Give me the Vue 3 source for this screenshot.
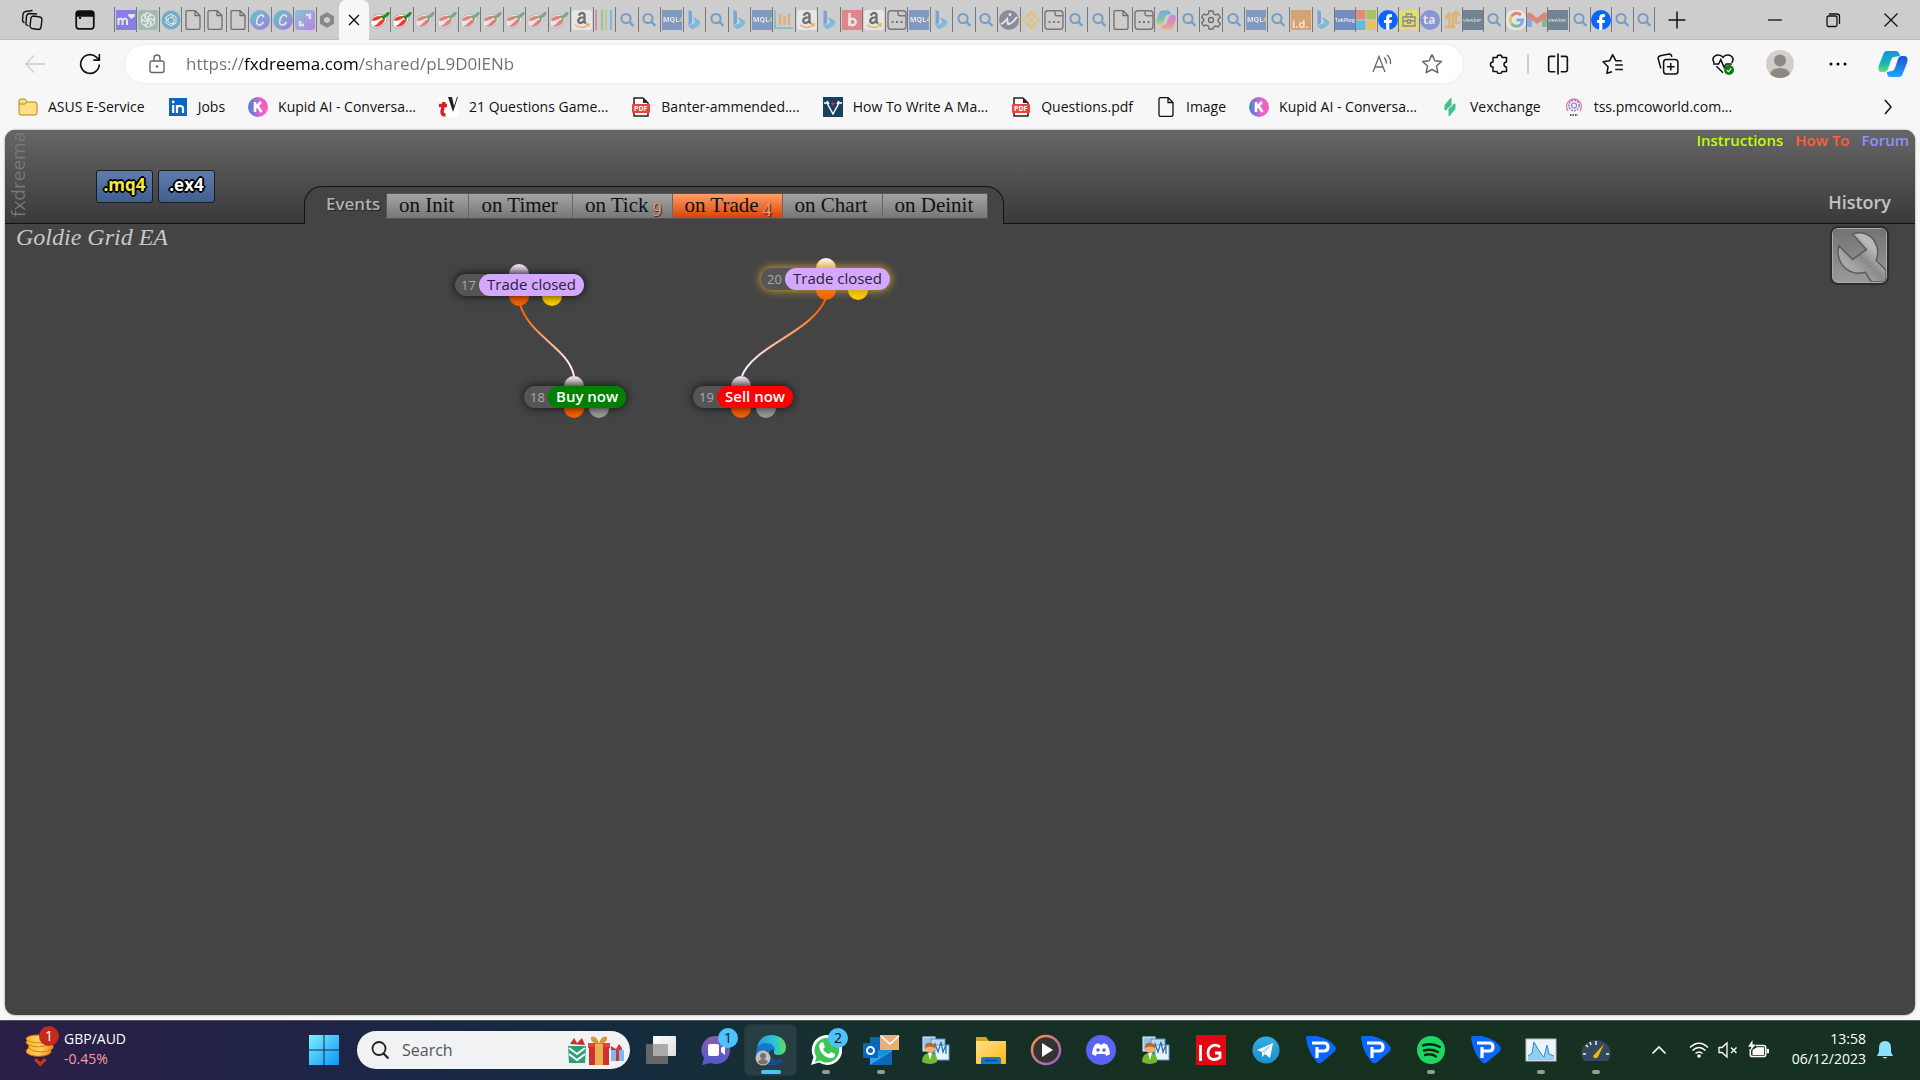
<template>
  <div class="screen">
    <svg class="gradients" aria-hidden="true">
      <defs>
        <linearGradient id="gCanva" x1="0" y1="0" x2="1" y2="1"><stop offset="0" stop-color="#00c4cc" /><stop offset="1" stop-color="#7d2ae8" /></linearGradient>
        <linearGradient id="gExpand" x1="0" y1="0" x2="1" y2="1"><stop offset="0" stop-color="#20c8d8" /><stop offset="0.5" stop-color="#7a78f0" /><stop offset="1" stop-color="#a040e8" /></linearGradient>
        <linearGradient id="gBing" x1="0" y1="0" x2="1" y2="1"><stop offset="0" stop-color="#2a7fe8" /><stop offset="1" stop-color="#35c8e8" /></linearGradient>
        <linearGradient id="gKupid" x1="0" y1="0" x2="1" y2="0"><stop offset="0.1" stop-color="#5a7fd6" /><stop offset="0.6" stop-color="#e065d0" /><stop offset="1" stop-color="#ff5cae" /></linearGradient>
        <linearGradient id="gCoA" x1="0" y1="0" x2="0" y2="1"><stop offset="0" stop-color="#1292e8" /><stop offset="0.6" stop-color="#18b8b0" /><stop offset="1" stop-color="#6fdc78" /></linearGradient>
        <linearGradient id="gCoB" x1="0" y1="0" x2="0" y2="1"><stop offset="0" stop-color="#1a50d8" /><stop offset="1" stop-color="#20a8f8" /></linearGradient>
        <linearGradient id="gOldA" x1="0" y1="0" x2="0" y2="1"><stop offset="0" stop-color="#2a80f0" /><stop offset="0.6" stop-color="#30b890" /><stop offset="1" stop-color="#f0c820" /></linearGradient>
        <linearGradient id="gOldB" x1="0" y1="0" x2="0" y2="1"><stop offset="0" stop-color="#b050f0" /><stop offset="0.5" stop-color="#f05090" /><stop offset="1" stop-color="#ff9040" /></linearGradient>
        <linearGradient id="gWin" x1="0" y1="0" x2="1" y2="1"><stop offset="0" stop-color="#7df0ff" /><stop offset="1" stop-color="#0a94f8" /></linearGradient>
        <linearGradient id="gEdge" x1="0" y1="0" x2="1" y2="0"><stop offset="0" stop-color="#1b9de2" /><stop offset="0.6" stop-color="#2cc4d8" /><stop offset="1" stop-color="#5fe05a" /></linearGradient>
        <linearGradient id="gFolder" x1="0" y1="0" x2="1" y2="1"><stop offset="0" stop-color="#ffe38a" /><stop offset="1" stop-color="#fdb813" /></linearGradient>
        <linearGradient id="gChat" x1="0" y1="0" x2="0" y2="1"><stop offset="0" stop-color="#8a5cb0" /><stop offset="1" stop-color="#5058d0" /></linearGradient>
        <linearGradient id="gPlay" x1="0" y1="0" x2="1" y2="1"><stop offset="0" stop-color="#ff9040" /><stop offset="1" stop-color="#9a5ad8" /></linearGradient>
        <linearGradient id="gTele" x1="0" y1="0" x2="0" y2="1"><stop offset="0" stop-color="#35ade1" /><stop offset="1" stop-color="#1c8fd0" /></linearGradient>
        <linearGradient id="gCoin" x1="0" y1="0" x2="1" y2="0"><stop offset="0" stop-color="#ffb62e" /><stop offset="0.5" stop-color="#ffcf5c" /><stop offset="1" stop-color="#f08a14" /></linearGradient>
        <linearGradient id="gWrench" x1="0" y1="0" x2="0" y2="1"><stop offset="0" stop-color="#737373" /><stop offset="1" stop-color="#9a9a9a" /></linearGradient>
        <linearGradient id="gShaft" x1="0" y1="1" x2="1" y2="0"><stop offset="0.3" stop-color="#a8a8a8" /><stop offset="0.5" stop-color="#8a8a8a" /><stop offset="0.7" stop-color="#b8b8b8" /></linearGradient>
        <linearGradient id="gWhite" x1="0" y1="0" x2="1" y2="1"><stop offset="0" stop-color="#fff" /><stop offset="1" stop-color="#ddd" /></linearGradient>
      </defs>
    </svg>

    <svg class="sprite" aria-hidden="true">
      <!-- favicons -->
      <symbol id="m" viewBox="0 0 20 20"><rect width="20" height="20" fill="#4433ff" /><path d="M2.500 15V8M2.500 10.500q3-4 4 0V15M6.500 10.500q3-4 4.500 0V15" fill="none" stroke="#fff" stroke-width="2" /><path d="M15.500 9l-3.500-3q0-3.500 3.500-1.500 3.500-2 3.500 1.500z" fill="#fff" /></symbol>
      <symbol id="gpt" viewBox="0 0 20 20"><rect width="20" height="20" rx="2" fill="#74aa9c" /><g fill="none" stroke="#fff" stroke-width="1.200"><path d="M7 9V5q1-2.500 4-2 2 .5 2.500 2L10 7v5" /><path d="M7 9V5q1-2.500 4-2 2 .5 2.500 2L10 7v5" transform="rotate(60 10 10)" /><path d="M7 9V5q1-2.500 4-2 2 .5 2.500 2L10 7v5" transform="rotate(120 10 10)" /><path d="M7 9V5q1-2.500 4-2 2 .5 2.500 2L10 7v5" transform="rotate(180 10 10)" /><path d="M7 9V5q1-2.500 4-2 2 .5 2.500 2L10 7v5" transform="rotate(240 10 10)" /><path d="M7 9V5q1-2.500 4-2 2 .5 2.500 2L10 7v5" transform="rotate(300 10 10)" /></g></symbol>
      <symbol id="gpt2" viewBox="0 0 20 20"><circle cx="10" cy="10" r="9.500" fill="#1a8fc8" /><g fill="none" stroke="#fff"><path d="M10 4l5 3v6l-5 3-5-3V7z" /><path d="M10 7l3 2v3l-3 2-3-2V9z" /><path d="M10 4l3 5M15 13l-5 1M5 7l2 5" /></g></symbol>
      <symbol id="file" viewBox="0 0 20 20"><path d="M3 2.500q0-2 2-2h7l5 5v12q0 2-2 2H5q-2 0-2-2zM12 .5v5h5" fill="none" stroke="currentColor" stroke-width="1.300" /></symbol>
      <symbol id="canva" viewBox="0 0 20 20"><circle cx="10" cy="10" r="10" fill="url(#gCanva)" /><path d="M13.500 7.500q0-3-2.500-2.500C7 6 5 14 8.500 15q3 .5 5-3" fill="none" stroke="#fff" stroke-width="1.600" /></symbol>
      <symbol id="expand" viewBox="0 0 20 20"><rect width="20" height="20" rx="3" fill="url(#gExpand)" /><path d="M11 5h4v4M9 15H5v-4" fill="none" stroke="#fff" stroke-width="2.400" /></symbol>
      <symbol id="hex" viewBox="0 0 20 20"><path d="M10 4.500l5 2.800v5.400l-5 2.800-5-2.800V7.300z" fill="none" stroke="#444" stroke-width="4" /></symbol>
      <symbol id="chilli" viewBox="0 0 20 20"><path d="M1 15Q0 8 5 5.500T13 5l4 1q1 5-4 9t-9 3q-2 0-3-3z" fill="#fff" stroke="#999" stroke-width="0.800" /><path d="M2 10q2-4 8-4l2 1q-3 3-9 4z" fill="#f03a30" /><path d="M3 16q4-1 6-4t6-3q0 3-4 6t-8 1z" fill="#f03a30" /><path d="M10 6q4 0 6-2.500T20 3q-2 4-5 5l-1 2z" fill="#228b2a" /></symbol>
      <symbol id="amazon" viewBox="0 0 20 20"><rect width="20" height="20" rx="3" fill="#fff" /><path d="M6.500 5.500Q10 1 12.500 4.500V12l1.500 1.500M12.500 7.500C6 7 5.500 11 7 12.500q3 1.500 5.500-2" fill="none" stroke="#111" stroke-width="2.300" /><path d="M3 15q7 5 13 0M14 14.500l3-.5-.5 3" fill="none" stroke="#f90" stroke-width="1.500" /></symbol>
      <symbol id="bars" viewBox="0 0 20 20"><path d="M2 0v20" stroke="#d02870" stroke-width="1.500" /><path d="M8 0v20" stroke="#60a030" stroke-width="1.500" /><path d="M12 0v20" stroke="#80c840" stroke-width="1.500" /><path d="M17 0v20" stroke="#30a0f0" stroke-width="2" /></symbol>
      <symbol id="search" viewBox="0 0 20 20"><circle cx="9" cy="8.500" r="4.600" fill="none" stroke="#1a6fc0" stroke-width="2" /><path d="M12.500 12l4 4" stroke="#1a6fc0" stroke-width="2.400" /></symbol>
      <symbol id="mql" viewBox="0 0 20 20"><rect width="20" height="20" fill="#3466b4" /><text x="1" y="12" font-size="7" font-weight="700" fill="#fff" font-family="Open Sans">MQL<tspan fill="#ffd800">4</tspan></text></symbol>
      <symbol id="bing" viewBox="0 0 20 20"><path d="M4.500 0L8 1.500v11L4.500 16z" fill="#2a7fe8" /><path d="M9 7l6.500 3.500q2 3-1 5.500L8 19.500 4.500 16l7-3.500z" fill="url(#gBing)" /></symbol>
      <symbol id="chart" viewBox="0 0 20 20"><path d="M1 0v18h18" fill="none" stroke="#30a0c0" stroke-width="1.600" /><path d="M6 4v11M10.500 6v9M15 4v11" stroke="#f09030" stroke-width="2.600" /></symbol>
      <symbol id="b" viewBox="0 0 20 20"><rect width="20" height="20" fill="#f04050" /><path d="M7.500 3v13" stroke="#fff" stroke-width="2.600" /><circle cx="10.500" cy="12" r="3.200" fill="none" stroke="#fff" stroke-width="2.400" /></symbol>
      <symbol id="window" viewBox="0 0 20 20"><path d="M4 .8h12q3 0 3 3v12.400q0 3-3 3H4q-3 0-3-3V3.800q0-3 3-3zM11 .8v3q0 2 2 2h6" fill="none" stroke="#222" stroke-width="1.400" /><path d="M4.500 12h2M9 12h2M13.500 12h2" stroke="#222" stroke-width="2" /></symbol>
      <symbol id="i" viewBox="0 0 20 20"><circle cx="10" cy="10" r="10" fill="#484c68" /><path d="M2 14q3-1 6-5l1 5q3 1 9-7" fill="none" stroke="#fff" stroke-width="2" /><circle cx="11" cy="4.500" r="1.500" fill="#fff" /></symbol>
      <symbol id="binance" viewBox="0 0 20 20"><path d="M10 7.500l2.500 2.500-2.500 2.500L7.500 10zM2.500 7.500L5 10l-2.500 2.500L0 10zM17.500 7.500L20 10l-2.500 2.500L15 10zM10 0l6 6-2.500 2.500L10 5 6.500 8.500 4 6zM10 20l6-6-2.500-2.500L10 15l-3.500-3.500L4 14z" fill="#f3ba2f" /></symbol>
      <symbol id="copilotOld" viewBox="0 0 20 20"><path d="M6 .5h6q2 0 3 3.500l-4 1q-1 0-2 3l-2 5q-1 2-3 2H2.500q-3.500 0-2-5L3 3q1-2.500 3-2.500z" fill="url(#gOldA)" /><path d="M14 19.500H8q-2 0-3-3.500l4-1q1 0 2-3l2-5q1-2 3-2h1.500q3.500 0 2 5L17 17q-1 2.500-3 2.500z" fill="url(#gOldB)" /></symbol>
      <symbol id="gear" viewBox="0 0 20 20"><path d="M8 1h4l.6 2.800 2 1.100 2.700-.9 2 3.500-2.100 1.900v2.200l2.100 1.900-2 3.500-2.700-.9-2 1.100L12 19H8l-.6-2.800-2-1.100-2.700.9-2-3.500 2.100-1.900V9.400L.7 7.500l2-3.500 2.700.9 2-1.100z" fill="none" stroke="#111" stroke-width="1.400" /><circle cx="10" cy="10" r="2.500" fill="none" stroke="#111" stroke-width="1.400" /></symbol>
      <symbol id="id" viewBox="0 0 20 20"><rect width="20" height="20" fill="#e07818" /><text x="1" y="18" font-size="11" font-weight="700" fill="#fff" font-family="Open Sans">i.d.</text></symbol>
      <symbol id="tek" viewBox="0 0 20 20"><rect width="20" height="20" fill="#1c50b0" /><text x="0" y="12" font-size="5" font-weight="700" fill="#fff" font-family="Open Sans">TekPing</text></symbol>
      <symbol id="ms" viewBox="0 0 20 20"><path d="M0 0h9.500v9.500H0z" fill="#f25022" /><path d="M10.500 0H20v9.500h-9.500z" fill="#7fba00" /><path d="M0 10.500h9.500V20H0z" fill="#00a4ef" /><path d="M10.500 10.500H20V20h-9.500z" fill="#ffb900" /></symbol>
      <symbol id="fb" viewBox="0 0 20 20"><circle cx="10" cy="10" r="10" fill="#0866ff" /><path d="M8.200 20v-7H6v-3h2.200V8.200Q8.200 4 12 4l2 .2v2.700h-1.300Q11.300 7 11.300 8.500V10H14l-.5 3h-2.200v7z" fill="#fff" /></symbol>
      <symbol id="bag" viewBox="0 0 20 20"><rect width="20" height="20" rx="4" fill="#f8ec20" /><path d="M4 7h12v9H4zM7.500 7V4h5v3M4 11h4M12 11h4M8.500 10h3v3h-3z" fill="none" stroke="#444" stroke-width="1.300" /></symbol>
      <symbol id="ta" viewBox="0 0 20 20"><circle cx="10" cy="10" r="10" fill="#4060d8" /><text x="3" y="14" font-size="12" font-weight="700" fill="#fff" font-family="Open Sans">ta</text></symbol>
      <symbol id="arrows" viewBox="0 0 20 20"><path d="M7.500 16V3M4 7l3.500-4M11 18V3M3 17h10M10 5l4-3.500L18 6M14 2v11h4M3 8h4" fill="none" stroke="#f09818" stroke-width="2.400" /></symbol>
      <symbol id="viewber" viewBox="0 0 20 20"><rect width="20" height="20" fill="#1a3c5c" /><text x="0" y="12" font-size="5" fill="#fff" font-family="Open Sans">viewber</text></symbol>
      <symbol id="google" viewBox="0 0 20 20"><rect width="20" height="20" rx="8" fill="#fff" /><g fill="none" stroke-width="3"><path d="M15 5Q10 1 5.500 6" stroke="#ea4335" /><path d="M5.500 6q-2.500 4 0 8" stroke="#fbbc05" /><path d="M5.500 14q4 4 9 1" stroke="#34a853" /><path d="M14.500 15q2-2 2-5H10.500" stroke="#4285f4" /></g></symbol>
      <symbol id="gmail" viewBox="0 0 20 20"><path d="M0 5l5 3v9H2q-2 0-2-2z" fill="#4285f4" /><path d="M20 5l-5 3v9h3q2 0 2-2z" fill="#34a853" /><path d="M0 4q1-3 4-1l6 5 6-5q3-2 4 1v3l-10 7L0 7z" fill="#ea4335" /></symbol>

      <!-- bookmarks -->
      <symbol id="bmFolder" viewBox="0 0 20 20"><path d="M1 4q0-2 2-2h4l2 3h8q2 0 2 2v9q0 2-2 2H3q-2 0-2-2z" fill="#ffdf85" stroke="#b8860b" /><path d="M1 7h6l2-2" fill="none" stroke="#b8860b" /></symbol>
      <symbol id="linkedin" viewBox="0 0 20 20"><rect x="1" y="1" width="18" height="18" fill="#0a66c2" /><path d="M5.200 8v8M9 8v8M9 11q1-2.500 3.500-2 2.500 0 2.500 3v4" fill="none" stroke="#fff" stroke-width="2.200" /><circle cx="5.200" cy="5" r="1.400" fill="#fff" /></symbol>
      <symbol id="kupid" viewBox="0 0 20 20"><circle cx="10" cy="10" r="10" fill="url(#gKupid)" /><path d="M7 5v10M7 11l6-6M9.500 9l4 6" stroke="#fff" stroke-width="2.600" fill="none" /></symbol>
      <symbol id="tv" viewBox="0 0 20 20"><rect width="20" height="20" fill="#fff" /><path d="M0 8.500h8M5 5L3 15q0 3 3.500 3" stroke="#e01b22" stroke-width="3.400" fill="none" /><path d="M9 0h4l2 9 3-9h1l-5 15z" fill="#222" /></symbol>
      <symbol id="pdf" viewBox="0 0 20 20"><path d="M3 8V1h9l5 5v13H3v-4" fill="#fff" stroke="#222" stroke-width="1.500" /><path d="M12 1v5h5z" fill="#222" /><rect x="1" y="7" width="18" height="9" rx="1" fill="#f43f3f" /><text x="3" y="14" font-size="7" font-weight="700" fill="#fff" font-family="Open Sans">PDF</text></symbol>
      <symbol id="vm" viewBox="0 0 20 20"><rect width="20" height="20" fill="#16415f" /><path d="M1 6h3l6 11 6-11h3M4 4l2 3M16 4l-2 3" fill="none" stroke="#fff" stroke-width="1.500" /><path d="M10 9L8 6.500q1-2 2-.5 1-1.500 2 .5z" fill="#f22" /></symbol>
      <symbol id="vex" viewBox="0 0 20 20"><path d="M11 1v7l-6 5V8zM9 19v-7l6-5v5zM5 13l6-2M9 9l6-2" fill="#44c08a" stroke="#44c08a" stroke-width="1" /><path d="M7 13l6-6" stroke="#f7f7f7" stroke-width="1" /></symbol>
      <symbol id="tss" viewBox="0 0 20 20"><path d="M4 14A7.500 7.500 0 1 1 16 14" fill="none" stroke="#e080a8" stroke-width="1.300" /><circle cx="10" cy="8.500" r="5.200" fill="none" stroke="#9080c8" stroke-width="1.600" stroke-dasharray="2 1" /><circle cx="10" cy="8.500" r="2.500" fill="none" stroke="#8080c8" stroke-width="1.200" /><path d="M6 18h8" stroke="#5050a0" stroke-width="2" stroke-dasharray="1.500 1" /></symbol>

      <!-- browser toolbar -->
      <symbol id="workspaces" viewBox="0 0 22 22"><g fill="none" stroke="currentColor" stroke-width="1.400" stroke-linejoin="round"><path d="M12.500 7l6.500 1q2 .5 2 2.500l-1 8q-.5 2-2.500 2l-6.500-1q-2-.5-2-2.500l1-8q.5-2 2.500-2z" /><path d="M7.500 17L5 15.500 5.500 7q.5-2 2.500-2.500l8 .5" /><path d="M3.500 14L1.500 12 2 5q.5-2 2.500-2.500l7-1" /></g></symbol>
      <symbol id="tabmenu" viewBox="0 0 20 20"><rect x="2" y="2" width="16" height="16" rx="2.500" fill="none" stroke="currentColor" stroke-width="1.600" /><path d="M2 3q0-1 2-1h12q2 0 2 1v4H2z" fill="currentColor" /><path d="M5.500 7v2" stroke="currentColor" stroke-width="2" /></symbol>
      <symbol id="x" viewBox="0 0 20 20"><path d="M4.500 4.500l11 11M15.500 4.500l-11 11" stroke="currentColor" stroke-width="1.500" /></symbol>
      <symbol id="plus" viewBox="0 0 20 20"><path d="M10 1.500v17M1.500 10h17" stroke="currentColor" stroke-width="1.500" /></symbol>
      <symbol id="min" viewBox="0 0 20 20"><path d="M3 10h14" stroke="currentColor" stroke-width="1.300" /></symbol>
      <symbol id="max" viewBox="0 0 20 20"><rect x="4" y="6" width="10" height="10.500" rx="1.500" fill="none" stroke="currentColor" stroke-width="1.300" /><path d="M6 4h8q2.500 0 2.500 2.500V14" fill="none" stroke="currentColor" stroke-width="1.300" /></symbol>
      <symbol id="close" viewBox="0 0 20 20"><path d="M3.500 3.500l13 13M16.500 3.500l-13 13" stroke="currentColor" stroke-width="1.300" /></symbol>
      <symbol id="back" viewBox="0 0 20 20"><path d="M20 10H1M9 1.500L.8 10 9 18.500" fill="none" stroke="currentColor" stroke-width="1.300" /></symbol>
      <symbol id="reload" viewBox="0 0 20 20"><path d="M18.500 10.500A8.500 8.500 0 1 1 16 4l2.500 2.500M18.500 1v5.500H13" fill="none" stroke="currentColor" stroke-width="1.500" /></symbol>
      <symbol id="lock" viewBox="0 0 20 20"><rect x="3" y="7" width="14" height="11.500" rx="2" fill="none" stroke="currentColor" stroke-width="1.400" /><path d="M7 7V4q0-3 3-3t3 3v3" fill="none" stroke="currentColor" stroke-width="1.400" /><circle cx="10" cy="12.500" r="1.300" fill="currentColor" /></symbol>
      <symbol id="aloud" viewBox="0 0 20 20"><path d="M1 18L7 2.500 13 18M3 13h8M12 3.500q2.500 2 2.500 6M15 1q4 3 3.500 9" fill="none" stroke="currentColor" stroke-width="1.300" /></symbol>
      <symbol id="star" viewBox="0 0 20 20"><path d="M10 1.500l2.600 5.600 6 .7-4.500 4.100 1.200 6L10 15l-5.300 2.900 1.200-6L1.400 7.800l6-.7z" fill="none" stroke="currentColor" stroke-width="1.300" stroke-linejoin="round" /></symbol>
      <symbol id="puzzle" viewBox="0 0 20 20"><path d="M8 3.500q0-2.500 2.500-2.500T13 3.500h4.500V8Q15 8 15 10.500t2.500 2.500v4.500H13q0 2-2.500 2T8 17.500H4V13q-2.500 0-2.500-2.500T4 8V3.500z" fill="none" stroke="currentColor" stroke-width="1.500" stroke-linejoin="round" /></symbol>
      <symbol id="split" viewBox="0 0 20 20"><path d="M10 .5v19M7.500 3H3q-1.500 0-1.500 1.500v11Q1.500 17 3 17h4.500M12.500 3H17q1.500 0 1.500 1.500v11q0 1.500-1.500 1.500h-4.500" fill="none" stroke="currentColor" stroke-width="1.500" /></symbol>
      <symbol id="favs" viewBox="0 0 20 20"><path d="M9 17l-4.500 1.500 1-6L1 8l6-1 2.700-5.500L12.500 7H18M12 11h7M12 15h7" fill="none" stroke="currentColor" stroke-width="1.400" stroke-linejoin="round" /></symbol>
      <symbol id="collections" viewBox="0 0 20 20"><rect x="6" y="6" width="13" height="13" rx="2.500" fill="none" stroke="currentColor" stroke-width="1.400" /><path d="M12.500 9v7M9 12.500h7M3.500 14L1 5q0-2 2-2.500L11 1q2 0 2.500 2.500" fill="none" stroke="currentColor" stroke-width="1.400" /></symbol>
      <symbol id="heart" viewBox="0 0 20 20"><path d="M2 9Q-1 4 4 2q4-1 6 2 2-3 6-2 5 2 2 7M4 12l6 6M1 10h5l2-4 3 7 2-3h5" fill="none" stroke="currentColor" stroke-width="1.400" /><circle cx="15.500" cy="15.500" r="4.500" fill="#0f7b0f" /><path d="M13.500 15.500l1.500 1.500 2.500-3" fill="none" stroke="#fff" /></symbol>
      <symbol id="avatar" viewBox="0 0 28 28"><circle cx="14" cy="14" r="14" fill="#d2cfcb" /><circle cx="14" cy="10.500" r="6" fill="#8d8884" /><path d="M4 24q2-6 10-6t10 6q-4 4-10 4T4 24z" fill="#8d8884" /></symbol>
      <symbol id="dots" viewBox="0 0 20 20"><circle cx="3" cy="10" r="1.500" /><circle cx="10" cy="10" r="1.500" /><circle cx="17" cy="10" r="1.500" /></symbol>
      <symbol id="copilot" viewBox="0 0 30 28"><path d="M9 1h9q3 0 4 5l-6 1q-2 0-3 3l-3 9q-1 3-4 3H4q-5 0-3-7L5 5q1-4 4-4z" fill="url(#gCoA)" /><path d="M21 27h-9q-3 0-3-5l5-1q2 0 3-3l3-9q1-3 4-3h2q5 0 3 7l-4 10q-1 4-4 4z" fill="url(#gCoB)" /><path d="M15 8h4l-4 12h-4z" fill="#fff" opacity="0.800" /></symbol>
      <symbol id="chevron" viewBox="0 0 20 20"><path d="M7 3l6 7-6 7" fill="none" stroke="currentColor" stroke-width="1.500" /></symbol>

      <!-- taskbar -->
      <symbol id="tWin" viewBox="0 0 30 30"><path d="M0 0h14.500v14.500H0zM15.500 0H30v14.500H15.500zM0 15.500h14.500V30H0zM15.500 15.500H30V30H15.500z" fill="url(#gWin)" /></symbol>
      <symbol id="tView" viewBox="0 0 32 32"><rect x="1" y="10" width="22" height="20" rx="1" fill="#666" /><rect x="8" y="2" width="23" height="20" rx="1" fill="url(#gWhite)" /><rect x="8" y="10" width="15" height="12" fill="#aaa" /></symbol>
      <symbol id="tChat" viewBox="0 0 32 32"><path d="M16 2a14 14 0 1 1-5 27L2 31l2-7A14 14 0 0 1 16 2z" fill="url(#gChat)" /><rect x="8" y="10" width="11" height="12" rx="2" fill="#fff" /><path d="M21 14l4-3v10l-4-3z" fill="#fff" /></symbol>
      <symbol id="tEdge" viewBox="0 0 32 32"><path d="M2 13Q5 1 17 1q13 1 14 12 0 8-8 8-5 0-4-4 1-5-5-6-8-1-12 2z" fill="url(#gEdge)" /><path d="M1 18q1-9 10-9 8 0 9 7-6-1-6 4 1 8 14 6-5 5-12 5Q2 30 1 18z" fill="#1878d0" /><path d="M13 15q-2 5 1 8 4 4 14 3-9 8-17 3-5-6 2-14z" fill="#124a94" /><circle cx="8" cy="24" r="7.500" fill="#c4c0bc" /><circle cx="8" cy="22" r="3" fill="#77726e" /><path d="M3 28.500q1-3.500 5-3.500t5 3.500q-5 4-10 0z" fill="#77726e" /></symbol>
      <symbol id="tWhats" viewBox="0 0 32 32"><path d="M16 1a15 15 0 1 1-7 27.500L1 31l2.500-8A15 15 0 0 1 16 1z" fill="#fff" /><path d="M16 4a12.300 12.300 0 1 1-6 22.500L5 28l1.500-5A12.300 12.300 0 0 1 16 4z" fill="#3dc453" /><path d="M10 9l3-1 2 5-2 2q2 4 6 5l2-2 4 2q0 4-4 4-6 0-10-6-3-5-1-9z" fill="#fff" /></symbol>
      <symbol id="tOutlook" viewBox="0 0 38 32"><rect x="8" y="3" width="22" height="26" fill="#1490df" /><path d="M8 3h11v13H8z" fill="#0a64b8" /><path d="M8 16l11 7 11-7v15H8z" fill="#28a8ea" /><path d="M8 31l22-14v14z" fill="#1066b8" /><rect x="1" y="9" width="15" height="15" rx="1" fill="#0a64c0" /><circle cx="8.500" cy="16.500" r="3.500" fill="none" stroke="#fff" stroke-width="2" /><rect x="18" y="1" width="19" height="15" fill="#e8b078" /><path d="M19 2l9 8 9-8" fill="none" stroke="#fff" stroke-width="1.500" /></symbol>
      <symbol id="tMt4" viewBox="0 0 32 32"><rect x="3" y="3" width="12" height="14" fill="#8ec8f0" stroke="#e8f4ff" /><rect x="11" y="5" width="14" height="14" fill="#b8dcf4" stroke="#4a90cc" /><rect x="15" y="11" width="14" height="15" fill="#e8f4fc" stroke="#5a9ccc" /><path d="M13 19l2-9 3 8 3-10 2 10 3-7v9" fill="none" stroke="#3070b0" stroke-width="1.300" /><circle cx="10" cy="14" r="5" fill="#f0b070" /><path d="M5 14q0-6 6-5 5 1 4 5-5-3-10 0z" fill="#c8601c" /><path d="M2 28q0-9 8-9t7 9q-7 4-15 0z" fill="#70b830" /><path d="M8 19h4l-2 7z" fill="#fff" /></symbol>
      <symbol id="tFolder" viewBox="0 0 32 32"><path d="M1 3h10l3 4h17v8H1z" fill="#e0a010" /><rect x="1" y="7" width="30" height="23" rx="1" fill="url(#gFolder)" /><path d="M6 30v-5q0-2 2-2h16q2 0 2 2v5z" fill="#1478d0" /><path d="M10 26.500h12" stroke="#0a4f96" stroke-width="1.500" /></symbol>
      <symbol id="tPlay" viewBox="0 0 32 32"><circle cx="16" cy="16" r="14" fill="#333" stroke="url(#gPlay)" stroke-width="2.500" /><path d="M12 9l11 7-11 7z" fill="#fff" /></symbol>
      <symbol id="tDiscord" viewBox="0 0 32 32"><circle cx="16" cy="16" r="15" fill="#5865f2" /><path d="M10 10.500l3.500-1.500 1 1.500h3l1-1.500 3.500 1.500q3 4.500 3 9.500l-3.500 2-1.500-2h-8l-1.500 2L7 20q0-5 3-9.500z" fill="#fff" /><circle cx="13" cy="16" r="1.800" fill="#5865f2" /><circle cx="19" cy="16" r="1.800" fill="#5865f2" /></symbol>
      <symbol id="tIg" viewBox="0 0 32 32"><rect x="1" y="1" width="30" height="30" fill="#e30613" /><path d="M5.500 11v16M25 13q-4-3-8-1t-4 7q0 6 6 6.500 3 0 6-2v-4.500h-5" fill="none" stroke="#fff" stroke-width="2.800" /></symbol>
      <symbol id="tTele" viewBox="0 0 32 32"><circle cx="16" cy="16" r="13.500" fill="url(#gTele)" /><path d="M7 16l16-7-3 15-5-4-3 3v-5z" fill="#fff" /><path d="M12 18l8-6-6 7" stroke="#8cc8ec" fill="none" /></symbol>
      <symbol id="tP" viewBox="0 0 32 32"><path d="M1 4q0-2 2-2h9q14 3 19 12 0 3-3 5L16 29q-3 1-4-1Q3 19 1 4z" fill="#0a66ff" /><path d="M7 9h12q4 0 4 4t-4 4h-6M12 13v11" fill="none" stroke="#fff" stroke-width="3.200" /></symbol>
      <symbol id="tSpotify" viewBox="0 0 32 32"><circle cx="16" cy="16" r="14" fill="#1ed760" /><path d="M8 11.500q9-3 17 1.500M9 16.500q7-2 14 1.500M10 21q6-2 11 1.500" fill="none" stroke="#10251a" stroke-width="2.400" stroke-linecap="round" /></symbol>
      <symbol id="tMon" viewBox="0 0 32 32"><rect x="1" y="5" width="30" height="22" fill="#eef4f8" stroke="#bbb" /><path d="M3 22l4-3 2-11 4 7 4 6 2 2 3-12 2 9 5 2v4H3z" fill="#8cd0f4" /><path d="M3 22l4-3 2-11 4 7 4 6 2 2 3-12 2 9 5 2" fill="none" stroke="#2a8cc8" /></symbol>
      <symbol id="tGauge" viewBox="0 0 32 32"><path d="M4 27Q-1 20 3 13 8 6 16 6t13 7q4 7-1 14z" fill="#34495e" /><path d="M3 20h3M26 20h3M6 11l2 2M16 7v4M10 8l1 3" stroke="#eee" stroke-width="1.500" /><path d="M24 10l-6 13q-4 3-5-1z" fill="#f5b50a" /></symbol>
      <symbol id="coins" viewBox="0 0 32 32"><g fill="url(#gCoin)" stroke="#d87a10" stroke-width="0.800"><ellipse cx="13" cy="18" rx="11" ry="4.500" /><ellipse cx="15" cy="14" rx="11" ry="4.500" /><ellipse cx="13" cy="10" rx="11" ry="4" /><ellipse cx="13" cy="7" rx="11" ry="3.500" /></g><path d="M10 25l4.500 4.500L19 25" fill="none" stroke="#c43a18" stroke-width="3" /></symbol>
      <symbol id="gifts" viewBox="0 0 58 32"><path d="M2 12h18l-1 17H3z" fill="#2ca070" /><path d="M3 14l8 6 8-6M3 20l8 6 8-6" fill="none" stroke="#fff" stroke-width="2" /><path d="M4 10l4-6 3 5 5-5 3 7z" fill="#c83030" /><rect x="22" y="9" width="22" height="5" fill="#e84040" /><rect x="23" y="13" width="20" height="18" fill="#d03030" /><path d="M29 10h8v21h-8z" fill="#e8b050" /><path d="M33 10q-9-1-8-7 5-2 8 6 3-8 8-6 1 6-8 7z" fill="#d89838" /><rect x="45" y="16" width="13" height="11" fill="#80b8e8" /><path d="M50 16h3v11h-3z" fill="#d03838" /><path d="M45 12l5 3 3-5 3 4v2H45z" fill="#d03838" /></symbol>
      <symbol id="mag" viewBox="0 0 20 20"><circle cx="9" cy="8.500" r="6.500" fill="none" stroke="#222" stroke-width="1.800" /><path d="M13.500 13.500l5 5" stroke="#222" stroke-width="2.200" /></symbol>
      <symbol id="up" viewBox="0 0 20 20"><path d="M3.500 13.500L10 7l6.500 6.500" fill="none" stroke="#fff" stroke-width="1.600" /></symbol>
      <symbol id="wifi" viewBox="0 0 20 20"><path d="M1 7.500q9-8.500 18 0M3.500 10.500q6.500-6 13 0M6.500 13.500q3.500-3 7 0" fill="none" stroke="#fff" stroke-width="1.500" /><circle cx="10" cy="16" r="1.800" fill="#fff" /></symbol>
      <symbol id="mute" viewBox="0 0 20 20"><path d="M1 7.500h3L9 3v14l-5-4.500H1zM13 7.500l5.500 5.500M18.500 7.500L13 13" fill="none" stroke="#fff" stroke-width="1.300" /></symbol>
      <symbol id="battery" viewBox="0 0 20 20"><path d="M3 9v5q0 2 2 2h10q2 0 2-2V8q0-2-2-2H8" fill="none" stroke="#fff" stroke-width="1.400" /><path d="M5 10l4-2.500h6.500v7H5zM18 9h2v4h-2z" fill="#fff" /><path d="M5 1L1 7h3l-1 4 5-6H5z" fill="#fff" /></symbol>
      <symbol id="bell" viewBox="0 0 20 20"><path d="M10 1q6 0 6 7v4l2 4H2l2-4V8q0-7 6-7zM7.500 17h5q-2.500 3-5 0z" fill="#8fe0ff" /></symbol>
    </svg>

    <div class="tabstrip">
      <div class="strip-left">
        <button aria-label="Workspaces"><svg class="i22"><use href="#workspaces" /></svg></button>
        <button aria-label="Tab actions"><svg class="i22"><use href="#tabmenu" /></svg></button>
      </div>
      <div class="tabs tabs-before">
        <button v-for="(t, n) in tabsBefore" :key="n" class="tab" :aria-label="t">
          <svg class="fav dim"><use :href="'#' + t" /></svg>
        </button>
      </div>
      <button class="active-tab" aria-label="Close tab"><svg class="i18"><use href="#x" /></svg></button>
      <div class="tabs tabs-wide">
        <button v-for="(t, n) in tabsWide" :key="n" class="tab" :aria-label="t">
          <svg class="fav" :class="{ dim: n > 1 }"><use :href="'#' + t" /></svg>
        </button>
      </div>
      <div class="tabs tabs-narrow">
        <button v-for="(t, n) in tabsNarrow" :key="n" class="tab" :aria-label="t">
          <svg class="fav" :class="{ dim: t !== 'fb' }"><use :href="'#' + t" /></svg>
        </button>
      </div>
      <button class="new-tab" aria-label="New tab"><svg class="i20"><use href="#plus" /></svg></button>
      <div class="window-buttons">
        <button v-for="b in ['min', 'max', 'close']" :key="b" :aria-label="b"><svg class="i20"><use :href="'#' + b" /></svg></button>
      </div>
    </div>

    <div class="toolbar">
      <button class="nav disabled" aria-label="Back"><svg class="i20"><use href="#back" /></svg></button>
      <button class="nav" aria-label="Refresh"><svg class="i22"><use href="#reload" /></svg></button>
      <div class="address">
        <svg class="i20 grey"><use href="#lock" /></svg>
        <input v-model="url" class="url" type="text" aria-label="Address" />
        <svg class="i20 grey"><use href="#aloud" /></svg>
        <svg class="i22 grey"><use href="#star" /></svg>
      </div>
      <button class="tool" aria-label="Extensions"><svg class="i20"><use href="#puzzle" /></svg></button>
      <span class="divider"></span>
      <button v-for="t in ['split', 'favs', 'collections', 'heart']" :key="t" class="tool" :aria-label="t">
        <svg class="i22"><use :href="'#' + t" /></svg>
      </button>
      <button class="profile" aria-label="Profile"><svg class="i28"><use href="#avatar" /></svg></button>
      <button class="tool" aria-label="Settings"><svg class="i20"><use href="#dots" /></svg></button>
      <button class="tool" aria-label="Copilot"><svg class="i30"><use href="#copilot" /></svg></button>
    </div>

    <nav class="bookmarks">
      <a v-for="(b, n) in bookmarks" :key="n" href="#"><svg class="i20"><use :href="'#' + b.icon" /></svg>{{ b.text }}</a>
      <button aria-label="More bookmarks"><svg class="i20"><use href="#chevron" /></svg></button>
    </nav>

    <main class="page">
      <header class="head">
        <div class="brand">fxdreema</div>
        <div class="exports">
          <button class="mq">.mq4</button>
          <button class="ex">.ex4</button>
        </div>
        <div class="events">
          <span class="events-label">Events</span>
          <div class="event-tabs">
            <button v-for="e in events" :key="e.name" :class="{ on: e.name === current }" @click="current = e.name">
              {{ e.name }}<sub v-if="e.count">{{ e.count }}</sub>
            </button>
          </div>
        </div>
        <div class="head-right">
          <div class="links">
            <a class="instructions" href="#">Instructions</a>
            <a class="howto" href="#">How To</a>
            <a class="forum" href="#">Forum</a>
          </div>
          <a class="history" href="#">History</a>
        </div>
      </header>

      <section class="canvas">
        <h1>Goldie Grid EA</h1>
        <button class="wrench" aria-label="Options">
          <svg viewBox="0 0 54 54">
            <rect width="54" height="54" rx="4" fill="url(#gWrench)" />
            <path d="M20 5q14-4 22 7 6 9 2 20l10 10v12H39L33 44Q18 48 9 36 3 27 6 17l14 14 14-10z" fill="url(#gShaft)" stroke="#5a5a5a" stroke-width="1.500" />
          </svg>
        </button>

        <svg class="wires">
          <defs>
            <linearGradient id="wire" x1="0" y1="0" x2="0" y2="1">
              <stop offset="0.150" stop-color="#ff6400" />
              <stop offset="0.850" stop-color="#fff0fa" />
            </linearGradient>
          </defs>
          <path v-for="w in wires" :key="w" :d="w" />
        </svg>

        <div v-for="n in nodes" :key="n.id" class="node" :class="[n.kind, { selected: n.id === 20 }]" :style="{ left: n.x + 'px', top: n.y + 'px' }">
          <i class="port in" :style="{ left: n.port + 'px' }"></i>
          <i class="port out" :style="{ left: n.port + 'px' }"></i>
          <i class="port alt" :style="{ left: n.alt + 'px' }"></i>
          <div class="body"><span class="num">{{ n.id }}</span><span class="label">{{ n.label }}</span></div>
        </div>
      </section>
    </main>

    <footer class="taskbar">
      <div class="widget">
        <div class="coin-wrap"><svg class="i36"><use href="#coins" /></svg><span class="badge red">1</span></div>
        <div>
          <div class="pair">GBP/AUD</div>
          <div class="change">-0.45%</div>
        </div>
      </div>
      <button class="start" aria-label="Start"><svg class="i30"><use href="#tWin" /></svg></button>
      <label class="search">
        <svg class="i20"><use href="#mag" /></svg>
        <input type="text" placeholder="Search" aria-label="Search" />
        <svg class="gifts"><use href="#gifts" /></svg>
      </label>
      <div class="apps">
        <button v-for="(a, n) in apps" :key="n" class="app" :class="{ current: a.icon === 'tEdge' }" :aria-label="a.icon">
          <svg :class="a.icon === 'tOutlook' ? 'wide' : 'i32'"><use :href="'#' + a.icon" /></svg>
          <span v-if="a.badge" class="badge blue">{{ a.badge }}</span>
          <span v-if="a.open" class="dot"></span>
        </button>
      </div>
      <div class="tray">
        <svg class="i20 up"><use href="#up" /></svg>
        <svg class="i20"><use href="#wifi" /></svg>
        <svg class="i20"><use href="#mute" /></svg>
        <svg class="i22"><use href="#battery" /></svg>
        <div class="clock">
          <div>13:58</div>
          <div>06/12/2023</div>
        </div>
        <svg class="i20"><use href="#bell" /></svg>
      </div>
    </footer>
  </div>
</template>

<script setup>
import { ref } from "vue";

const url = ref("https://fxdreema.com/shared/pL9D0lENb");
const current = ref("on Trade");

const tabsBefore = ["m", "gpt", "gpt2", "file", "file", "file", "canva", "canva", "expand", "hex"];
const tabsWide = [
  ...Array(9).fill("chilli"),
  ..."amazon bars search search mql bing search bing mql chart amazon bing b amazon window mql bing search search i binance window search search file window copilotOld search gear search mql search id bing".split(" "),
];
const tabsNarrow = "tek ms fb bag ta arrows viewber search google gmail viewber search fb search search".split(" ");

const bookmarks = [
  { icon: "bmFolder", text: "ASUS E-Service" },
  { icon: "linkedin", text: "Jobs" },
  { icon: "kupid", text: "Kupid AI - Conversa..." },
  { icon: "tv", text: "21 Questions Game..." },
  { icon: "pdf", text: "Banter-ammended...." },
  { icon: "vm", text: "How To Write A Ma..." },
  { icon: "pdf", text: "Questions.pdf" },
  { icon: "file", text: "Image" },
  { icon: "kupid", text: "Kupid AI - Conversa..." },
  { icon: "vex", text: "Vexchange" },
  { icon: "tss", text: "tss.pmcoworld.com..." },
];

const events = [
  { name: "on Init" },
  { name: "on Timer" },
  { name: "on Tick", count: 9 },
  { name: "on Trade", count: 4 },
  { name: "on Chart" },
  { name: "on Deinit" },
];

const nodes = [
  { id: 17, label: "Trade closed", kind: "closed", x: 450, y: 50, port: 54, alt: 87 },
  { id: 20, label: "Trade closed", kind: "closed", x: 756, y: 44, port: 55, alt: 87 },
  { id: 18, label: "Buy now", kind: "buy", x: 519, y: 162, port: 40, alt: 65 },
  { id: 19, label: "Sell now", kind: "sell", x: 688, y: 162, port: 38, alt: 63 },
];
const wires = [
  "M515 80C524 112 564 124 569 152",
  "M821 74C808 108 748 122 737 152",
];

const apps = [
  { icon: "tView" },
  { icon: "tChat", badge: 1 },
  { icon: "tEdge", open: true },
  { icon: "tWhats", badge: 2, open: true },
  { icon: "tOutlook", open: true },
  { icon: "tMt4" },
  { icon: "tFolder" },
  { icon: "tPlay" },
  { icon: "tDiscord" },
  { icon: "tMt4" },
  { icon: "tIg" },
  { icon: "tTele" },
  { icon: "tP" },
  { icon: "tP" },
  { icon: "tSpotify", open: true },
  { icon: "tP" },
  { icon: "tMon", open: true },
  { icon: "tGauge", open: true },
];
</script>

<style>
body {
  margin: 0;
  background: #f7f7f7;
}
</style>

<style scoped>
.screen {
  display: flex;
  flex-direction: column;
  min-height: 100vh;
  font-family: "Open Sans", "Noto Sans", sans-serif;
  font-size: 14px;
  color: #111;
  overflow: hidden;
}

* {
  box-sizing: border-box;
}

svg {
  display: block;
  flex: none;
}

.gradients {
  position: absolute;
  width: 0;
  height: 0;
}

.sprite {
  display: none;
}

button {
  border: 0;
  padding: 0;
  background: none;
  color: inherit;
  font: inherit;
  display: flex;
  align-items: center;
  justify-content: center;
}

input {
  border: 0;
  outline: 0;
  padding: 0;
  background: none;
  font: inherit;
  min-width: 0;
}

a {
  color: inherit;
  text-decoration: none;
}

.i18 { width: 18px; height: 18px; }
.i20 { width: 20px; height: 20px; }
.i22 { width: 22px; height: 22px; }
.i28 { width: 28px; height: 28px; }
.i30 { width: 30px; height: 30px; }
.i32 { width: 32px; height: 32px; }
.i36 { width: 36px; height: 36px; }
.grey { color: #666; }

/* tab strip */
.tabstrip {
  display: flex;
  height: 40px;
  background: #cdcdcd;
  border-bottom: 1px solid #bdbdbd;
}

.strip-left {
  display: flex;
  width: 114px;
  padding-left: 21px;
  gap: 31px;
}

.tabs {
  display: flex;
  align-items: center;
}

.tabs-before { width: 225px; }
.tabs-wide { width: 966px; }
.tabs-narrow { width: 320px; }

.tab {
  flex: 1;
  min-width: 0;
  height: 25px;
  border-right: 1px solid #777;
}

.tabs-before .tab:last-child {
  border-color: transparent;
}

.tabs-before .tab:first-child {
  border-left: 1px solid #777;
}

.fav {
  width: 20px;
  height: 20px;
}

.dim {
  opacity: 0.5;
}

.active-tab {
  width: 30px;
  height: 40px;
  background: #f7f7f7;
  border-radius: 7px 7px 0 0;
}

.new-tab {
  width: 44px;
}

.window-buttons {
  display: flex;
  margin-left: auto;
}

.window-buttons button {
  width: 58px;
}

/* toolbar */
.toolbar {
  display: flex;
  align-items: center;
  height: 47px;
  padding-left: 7px;
}

.nav {
  width: 55px;
}

.disabled {
  color: #ccc;
}

.address {
  flex: 1;
  display: flex;
  align-items: center;
  height: 38px;
  margin: 0 8px;
  padding: 0 20px 0 22px;
  border-radius: 19px;
  background: #fff;
  box-shadow: 0 0 3px rgba(0, 0, 0, 0.08);
}

.url {
  flex: 1;
  margin-left: 19px;
  height: 26px;
  font-size: 17px;
  line-height: 24px;
  color: transparent;
  background: linear-gradient(90deg, #707070 58px, #000 58px, #000 173px, #707070 173px);
  -webkit-background-clip: text;
  background-clip: text;
}

.address .i22 {
  margin-left: 29px;
}

.tool {
  width: 55px;
}

.profile {
  width: 60px;
}

.divider {
  width: 2px;
  height: 20px;
  margin: 0 1px;
  background: #d0d0d0;
}

/* bookmarks */
.bookmarks {
  display: flex;
  align-items: center;
  height: 41px;
  padding: 0 22px 2px 18px;
  gap: 23px;
}

.bookmarks a {
  display: flex;
  align-items: center;
  gap: 10px;
  white-space: nowrap;
}

.bookmarks button {
  margin-left: auto;
}

/* fxdreema page */
.page {
  flex: 1;
  display: flex;
  flex-direction: column;
  margin: 2px 5px 5px;
  border-radius: 10px;
  background: #444;
  overflow: hidden;
  box-shadow: 0 0 2px #777;
}

.head {
  display: flex;
  height: 94px;
  border-bottom: 1px solid #111;
  background: linear-gradient(#666, #3a3a3a);
}

.brand {
  width: 26px;
  writing-mode: vertical-rl;
  transform: rotate(180deg);
  padding-top: 6px;
  font-size: 19px;
  line-height: 26px;
  color: #777;
}

.exports {
  display: flex;
  gap: 5px;
  width: 273px;
  padding: 40px 0 0 65px;
}

.exports button {
  width: 57px;
  height: 33px;
  border: 1px solid #1c1c1c;
  border-radius: 3px;
  background: linear-gradient(#607cae, #3f5f8e);
  font-size: 17px;
  font-weight: 700;
  line-height: 28px;
  align-items: flex-start;
  text-shadow: -2px 0 #000, 2px 0 #000, 0 -2px #000, 0 2px #000, -1px -1px #000, 1px 1px #000, 1px -1px #000, -1px 1px #000;
}

.exports .mq { color: #f8e83c; }
.exports .ex { color: #fff; }

.events {
  display: flex;
  align-items: flex-start;
  align-self: flex-end;
  height: 38px;
  margin-bottom: -1px;
  padding: 6px 15px 0 21px;
  border: 1px solid #111;
  border-bottom: 0;
  border-radius: 18px 18px 0 0;
  background: #444;
}

.events-label {
  width: 60px;
  font-size: 17px;
  font-weight: 600;
  line-height: 22px;
  color: #b0b0b0;
  text-shadow: 1px 1px 1px #222;
}

.event-tabs {
  display: flex;
  border: 1px solid #555;
}

.event-tabs button {
  height: 24px;
  padding: 0 14px 0 12px;
  border-right: 1px solid #666;
  background: linear-gradient(#a4a4a4, #777);
  font-family: "Liberation Serif", serif;
  font-size: 21px;
  line-height: 22px;
  align-items: flex-start;
  color: #111;
}

.event-tabs button:last-child {
  border-right: 0;
}

.event-tabs .on {
  background: linear-gradient(#ff9f68, #d84208);
}

sub {
  align-self: flex-end;
  margin: 0 -4px 0 4px;
  font-size: 18px;
  line-height: 16px;
  color: #e89868;
  text-shadow: 1px 1px 1px #222;
}

.head-right {
  display: flex;
  flex-direction: column;
  justify-content: space-between;
  align-items: flex-end;
  margin-left: auto;
  padding-right: 6px;
}

.links {
  display: flex;
  gap: 12px;
  font-size: 15px;
  font-weight: 600;
  line-height: 20px;
}

.instructions { color: #c0ff00; }
.howto { color: #ff6038; }
.forum { color: #9090ff; }

.history {
  margin: 0 18px 9px 0;
  font-size: 18px;
  font-weight: 600;
  line-height: 24px;
  color: #c4c4c4;
}

.canvas {
  flex: 1;
  position: relative;
}

h1 {
  margin: 0;
  padding: 0 11px;
  font-family: "Liberation Serif", serif;
  font-size: 24px;
  font-style: italic;
  font-weight: 400;
  line-height: 26px;
  color: #c8c8c8;
}

.wrench {
  position: absolute;
  top: 2px;
  right: 26px;
  width: 59px;
  height: 59px;
  border: 2px solid #2c2c2c;
  border-radius: 8px;
  background: #aaa;
}

.wrench svg {
  width: 53px;
  height: 53px;
}

.wires {
  position: absolute;
  inset: 0;
  width: 100%;
  height: 100%;
  pointer-events: none;
}

.wires path {
  fill: none;
  stroke: url(#wire);
  stroke-width: 2;
}

.node {
  position: absolute;
}

.body {
  position: relative;
  display: flex;
  height: 22px;
  border-radius: 11px;
  background: #555;
  box-shadow: 0 0 10px rgba(0, 0, 0, 0.8);
}

.selected .body {
  box-shadow: 0 0 8px 1px #c89a30;
}

.num {
  width: 24px;
  padding-left: 6px;
  font-size: 13px;
  line-height: 22px;
  color: #aaa;
}

.label {
  height: 22px;
  padding: 0 8px;
  border-radius: 11px;
  font-size: 15px;
  line-height: 20px;
}

.closed .label {
  background: #d4a8ff;
  color: #2a2433;
}

.buy .label,
.sell .label {
  background: #008000;
  color: #fff;
  font-weight: 600;
}

.sell .label {
  background: #f00;
}

.port {
  position: absolute;
  width: 20px;
  height: 20px;
  border-radius: 10px;
}

.in {
  top: -10px;
  background: linear-gradient(#fbeaf8, #a89ca6 50%);
}

.selected .in {
  background: linear-gradient(#fff0fa, #ffdc90 50%);
}

.out,
.alt {
  top: 12px;
  background: #fa6000;
}

.alt {
  background: #999;
}

.closed .alt {
  background: #ffcc00;
}

/* taskbar */
.taskbar {
  display: flex;
  align-items: center;
  height: 60px;
  box-shadow: inset 0 1px #555;
  background: linear-gradient(90deg, #2b1e47, #1d2547 18%, #142c3e 33%, #162f2c 45%, #16301f 65%, #163024);
  color: #fff;
}

.widget {
  display: flex;
  align-items: center;
  gap: 4px;
  width: 299px;
  padding: 0 0 2px 24px;
  line-height: 20px;
}

.coin-wrap {
  position: relative;
}

.change {
  color: #ff9aa2;
}

.badge {
  position: absolute;
  width: 20px;
  height: 20px;
  border-radius: 10px;
  font-size: 14px;
  line-height: 20px;
  text-align: center;
}

.red {
  top: -5px;
  right: 1px;
  background: #c42b1c;
}

.blue {
  top: 3px;
  right: 3px;
  background: #4cc2ff;
  color: #111;
}

.start {
  width: 50px;
}

.search {
  display: flex;
  align-items: center;
  width: 273px;
  height: 38px;
  margin-left: 8px;
  padding: 0 6px 0 13px;
  border-radius: 19px;
  background: #f0f2f4;
}

.search input {
  flex: 1;
  margin-left: 12px;
  font-size: 16px;
}

.search input::placeholder {
  color: #555;
}

.gifts {
  width: 58px;
  height: 32px;
}

.apps {
  display: flex;
  margin-left: 3px;
}

.app {
  position: relative;
  width: 51px;
  height: 50px;
  margin: 0 2px;
  border-radius: 5px;
}

.current {
  background: rgba(255, 255, 255, 0.08);
  box-shadow: 0 0 0 1px rgba(255, 255, 255, 0.05);
}

.wide {
  width: 38px;
  height: 32px;
}

.dot {
  position: absolute;
  bottom: 1px;
  width: 8px;
  height: 4px;
  border-radius: 2px;
  background: #999;
}

.current .dot {
  width: 20px;
  background: #4cc2ff;
}

.tray {
  display: flex;
  align-items: center;
  gap: 9px;
  margin-left: auto;
  padding-right: 25px;
}

.up {
  margin-right: 11px;
}

.clock {
  width: 88px;
  padding-bottom: 2px;
  line-height: 20px;
  text-align: right;
}
</style>
